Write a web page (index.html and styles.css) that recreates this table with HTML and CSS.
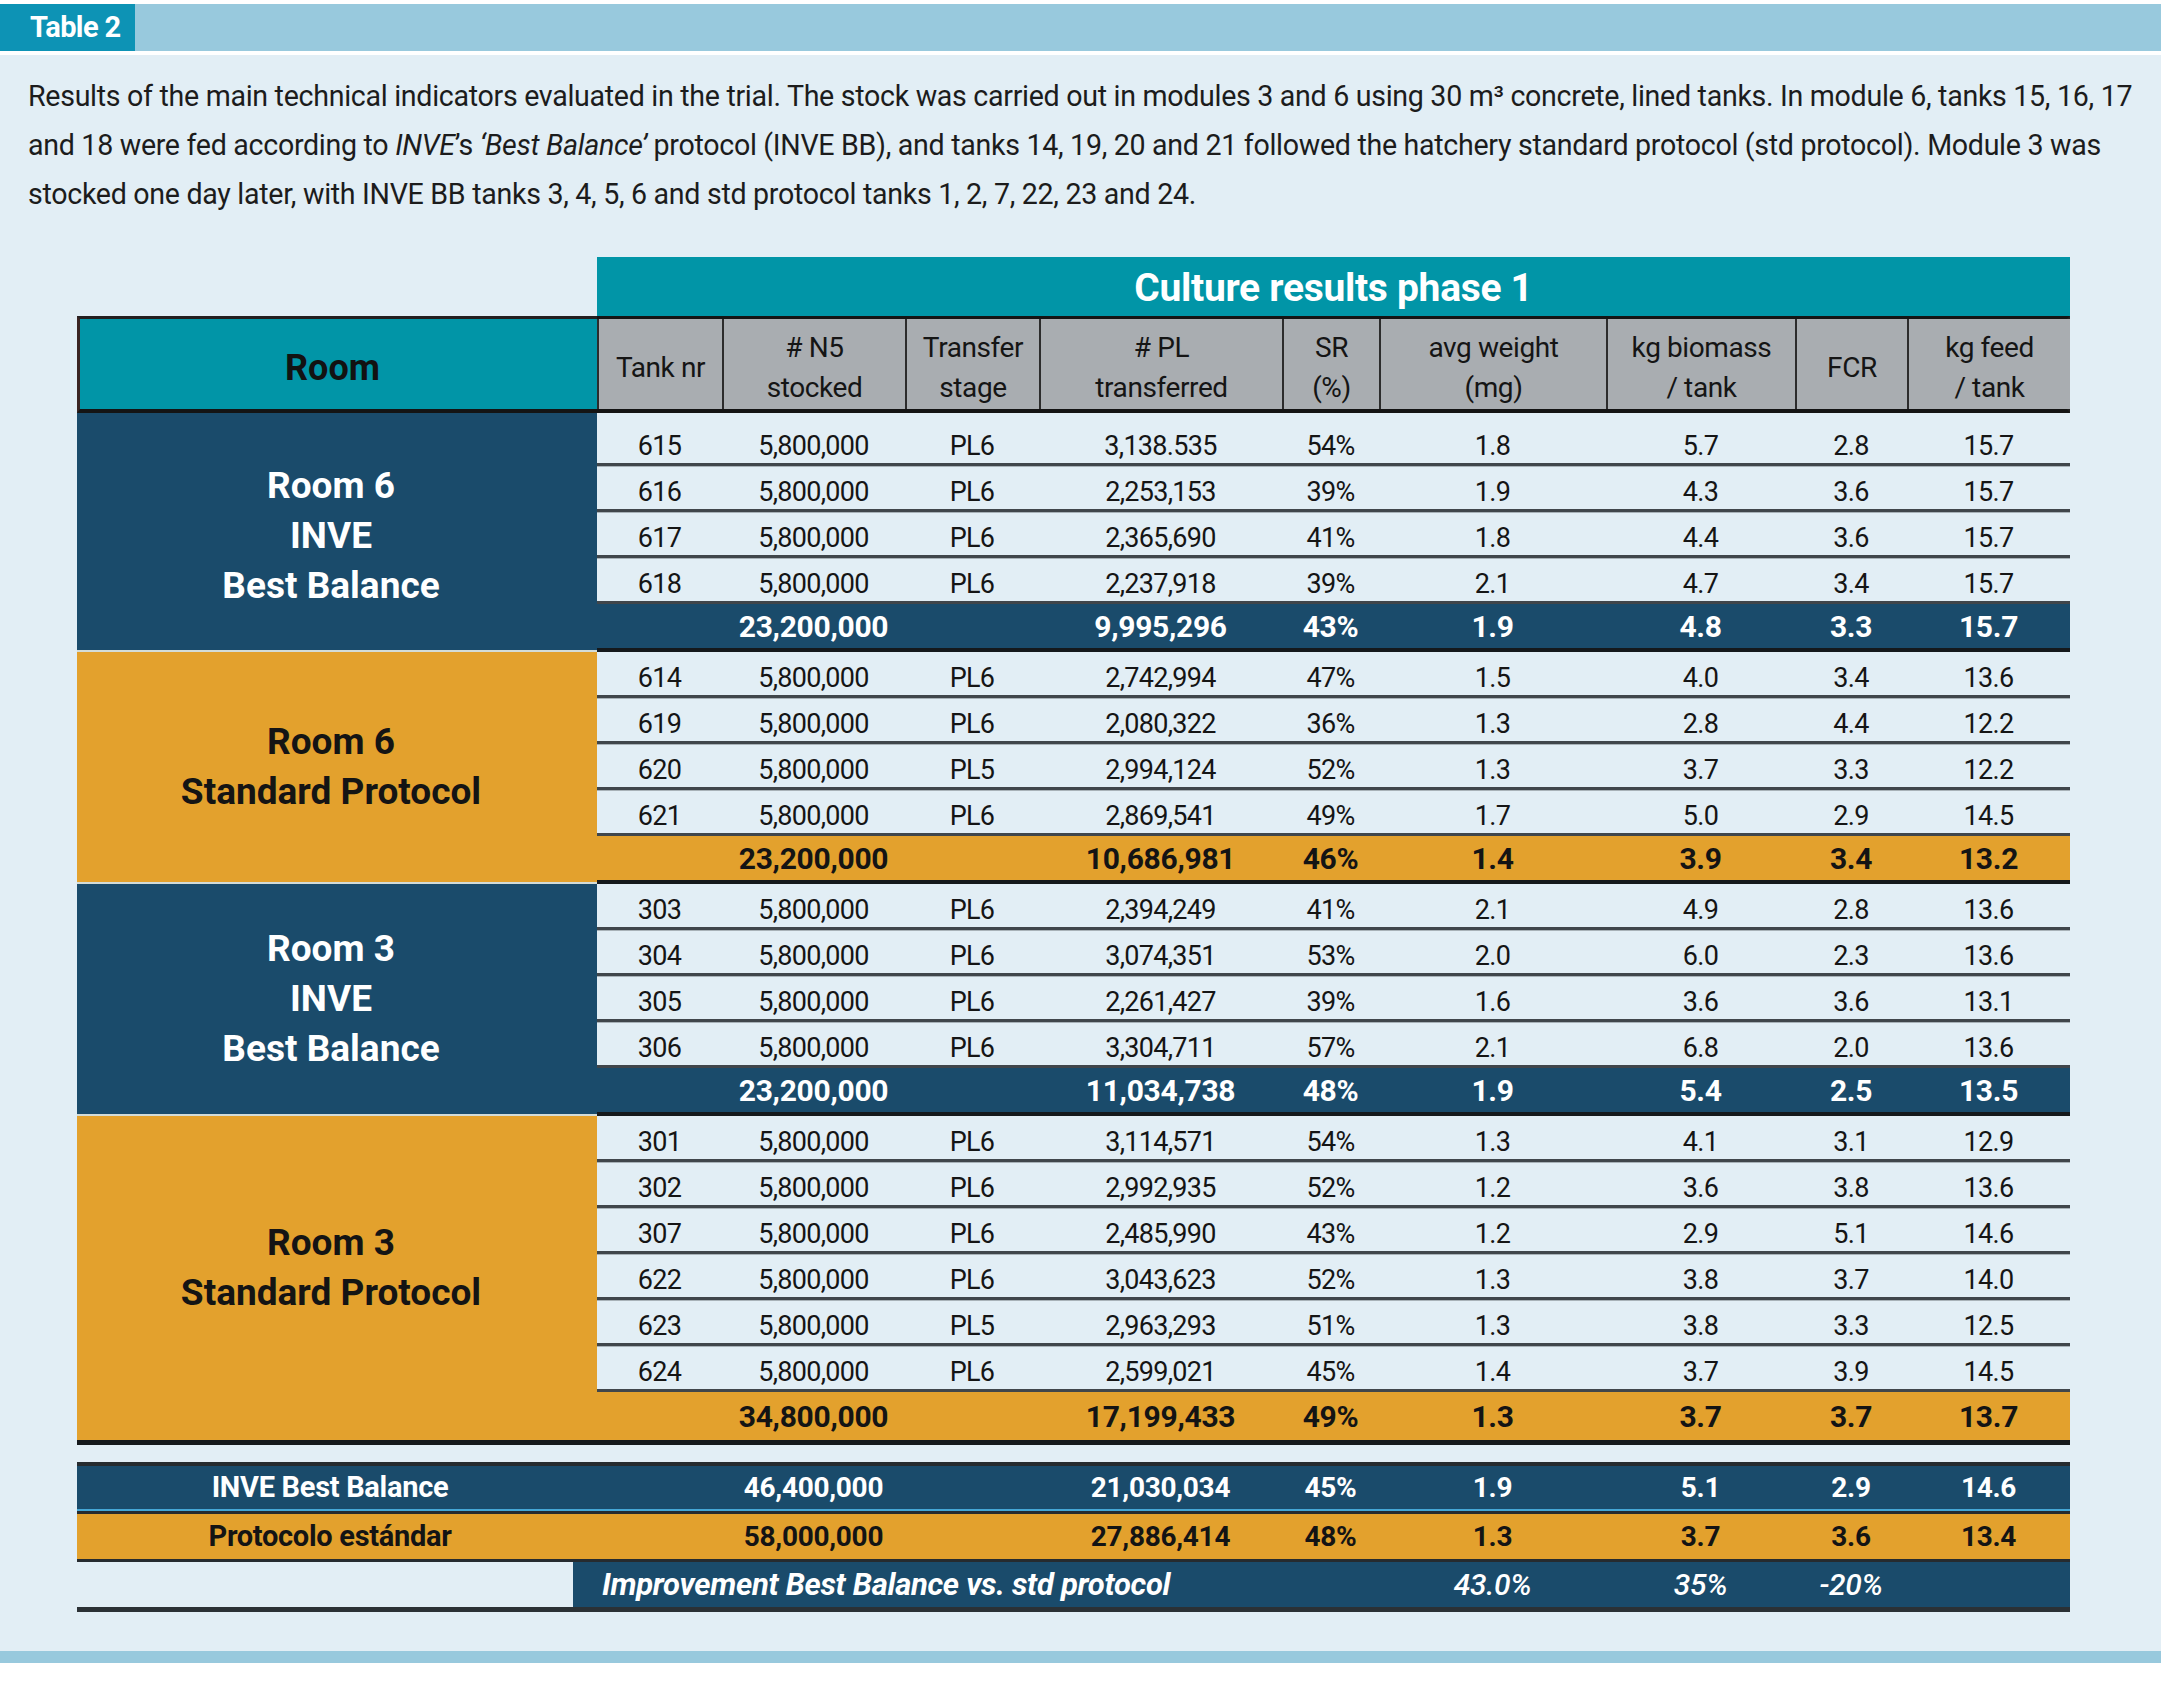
FILE: index.html
```html
<!DOCTYPE html>
<html lang="en">
<head>
<meta charset="utf-8">
<title>Table 2</title>
<link rel="stylesheet" href="styles.css">
</head>
<body>
<div class="topbar"><div class="tab">Table 2</div></div>
<div class="panel">
  <p class="intro">Results of the main technical indicators evaluated in the trial. The stock was carried out in modules 3 and 6 using 30 m³ concrete, lined tanks. In module 6, tanks 15, 16, 17<br>and 18 were fed according to <i>INVE</i>’s <i>‘Best Balance’</i> protocol (INVE BB), and tanks 14, 19, 20 and 21 followed the hatchery standard protocol (std protocol). Module 3 was<br>stocked one day later, with INVE BB tanks 3, 4, 5, 6 and std protocol tanks 1, 2, 7, 22, 23 and 24.</p>

  <div class="table">
    <div class="title-row"><div class="spacer"></div><div class="title">Culture results phase 1</div></div>
    <div class="head-row">
      <div class="room-head">Room</div>
      <div class="col-heads">
        <div>Tank nr</div>
        <div># N5<br>stocked</div>
        <div>Transfer<br>stage</div>
        <div># PL<br>transferred</div>
        <div>SR<br>(%)</div>
        <div>avg weight<br>(mg)</div>
        <div>kg biomass<br>/ tank</div>
        <div>FCR</div>
        <div>kg feed<br>/ tank</div>
      </div>
    </div>

    <div class="group navy first">
      <div class="room">Room 6<br>INVE<br>Best Balance</div>
      <div class="rows">
        <div class="row"><span>615</span><span>5,800,000</span><span>PL6</span><span>3,138.535</span><span>54%</span><span>1.8</span><span>5.7</span><span>2.8</span><span>15.7</span></div>
        <div class="row"><span>616</span><span>5,800,000</span><span>PL6</span><span>2,253,153</span><span>39%</span><span>1.9</span><span>4.3</span><span>3.6</span><span>15.7</span></div>
        <div class="row"><span>617</span><span>5,800,000</span><span>PL6</span><span>2,365,690</span><span>41%</span><span>1.8</span><span>4.4</span><span>3.6</span><span>15.7</span></div>
        <div class="row"><span>618</span><span>5,800,000</span><span>PL6</span><span>2,237,918</span><span>39%</span><span>2.1</span><span>4.7</span><span>3.4</span><span>15.7</span></div>
        <div class="row total"><span></span><span>23,200,000</span><span></span><span>9,995,296</span><span>43%</span><span>1.9</span><span>4.8</span><span>3.3</span><span>15.7</span></div>
      </div>
    </div>

    <div class="group orange">
      <div class="room">Room 6<br>Standard Protocol</div>
      <div class="rows">
        <div class="row"><span>614</span><span>5,800,000</span><span>PL6</span><span>2,742,994</span><span>47%</span><span>1.5</span><span>4.0</span><span>3.4</span><span>13.6</span></div>
        <div class="row"><span>619</span><span>5,800,000</span><span>PL6</span><span>2,080,322</span><span>36%</span><span>1.3</span><span>2.8</span><span>4.4</span><span>12.2</span></div>
        <div class="row"><span>620</span><span>5,800,000</span><span>PL5</span><span>2,994,124</span><span>52%</span><span>1.3</span><span>3.7</span><span>3.3</span><span>12.2</span></div>
        <div class="row"><span>621</span><span>5,800,000</span><span>PL6</span><span>2,869,541</span><span>49%</span><span>1.7</span><span>5.0</span><span>2.9</span><span>14.5</span></div>
        <div class="row total"><span></span><span>23,200,000</span><span></span><span>10,686,981</span><span>46%</span><span>1.4</span><span>3.9</span><span>3.4</span><span>13.2</span></div>
      </div>
    </div>

    <div class="group navy">
      <div class="room">Room 3<br>INVE<br>Best Balance</div>
      <div class="rows">
        <div class="row"><span>303</span><span>5,800,000</span><span>PL6</span><span>2,394,249</span><span>41%</span><span>2.1</span><span>4.9</span><span>2.8</span><span>13.6</span></div>
        <div class="row"><span>304</span><span>5,800,000</span><span>PL6</span><span>3,074,351</span><span>53%</span><span>2.0</span><span>6.0</span><span>2.3</span><span>13.6</span></div>
        <div class="row"><span>305</span><span>5,800,000</span><span>PL6</span><span>2,261,427</span><span>39%</span><span>1.6</span><span>3.6</span><span>3.6</span><span>13.1</span></div>
        <div class="row"><span>306</span><span>5,800,000</span><span>PL6</span><span>3,304,711</span><span>57%</span><span>2.1</span><span>6.8</span><span>2.0</span><span>13.6</span></div>
        <div class="row total"><span></span><span>23,200,000</span><span></span><span>11,034,738</span><span>48%</span><span>1.9</span><span>5.4</span><span>2.5</span><span>13.5</span></div>
      </div>
    </div>

    <div class="group orange last">
      <div class="room">Room 3<br>Standard Protocol</div>
      <div class="rows">
        <div class="row"><span>301</span><span>5,800,000</span><span>PL6</span><span>3,114,571</span><span>54%</span><span>1.3</span><span>4.1</span><span>3.1</span><span>12.9</span></div>
        <div class="row"><span>302</span><span>5,800,000</span><span>PL6</span><span>2,992,935</span><span>52%</span><span>1.2</span><span>3.6</span><span>3.8</span><span>13.6</span></div>
        <div class="row"><span>307</span><span>5,800,000</span><span>PL6</span><span>2,485,990</span><span>43%</span><span>1.2</span><span>2.9</span><span>5.1</span><span>14.6</span></div>
        <div class="row"><span>622</span><span>5,800,000</span><span>PL6</span><span>3,043,623</span><span>52%</span><span>1.3</span><span>3.8</span><span>3.7</span><span>14.0</span></div>
        <div class="row"><span>623</span><span>5,800,000</span><span>PL5</span><span>2,963,293</span><span>51%</span><span>1.3</span><span>3.8</span><span>3.3</span><span>12.5</span></div>
        <div class="row"><span>624</span><span>5,800,000</span><span>PL6</span><span>2,599,021</span><span>45%</span><span>1.4</span><span>3.7</span><span>3.9</span><span>14.5</span></div>
        <div class="row total"><span></span><span>34,800,000</span><span></span><span>17,199,433</span><span>49%</span><span>1.3</span><span>3.7</span><span>3.7</span><span>13.7</span></div>
      </div>
    </div>

    <div class="summary">
      <div class="sum-row navy"><span class="label">INVE Best Balance</span><span></span><span>46,400,000</span><span></span><span>21,030,034</span><span>45%</span><span>1.9</span><span>5.1</span><span>2.9</span><span>14.6</span></div>
      <div class="sum-row orange"><span class="label">Protocolo estándar</span><span></span><span>58,000,000</span><span></span><span>27,886,414</span><span>48%</span><span>1.3</span><span>3.7</span><span>3.6</span><span>13.4</span></div>
      <div class="improve-row">
        <div class="improve"><span class="label">Improvement Best Balance vs. std protocol</span><span>43.0%</span><span>35%</span><span>-20%</span><span></span></div>
      </div>
    </div>
  </div>
</div>
<div class="bottombar"></div>
</body>
</html>
```

FILE: styles.css
```css
* { box-sizing: border-box; }

body {
  margin: 0;
  background: #ffffff;
  font-family: Roboto, "Liberation Sans", "DejaVu Sans", sans-serif;
  color: #1b1b1b;
}

.topbar {
  margin-top: 4px;
  height: 47px;
  background: #98c9dd;
  display: flex;
}

.tab {
  width: 135px;
  background: #0d93b5;
  color: #ffffff;
  font-weight: bold;
  font-size: 29px;
  line-height: 47px;
  padding-left: 30px;
  white-space: nowrap;
  letter-spacing: -0.6px;
}

.panel {
  margin-top: 4px;
  background: #e2eef5;
  padding: 17px 0 39px 28px;
}

.intro {
  margin: 0;
  font-size: 28.6px;
  line-height: 49px;
  letter-spacing: -0.3px;
  white-space: nowrap;
  color: #1c1c1c;
}

.table {
  margin: 38px 0 0 49px;
  width: 1993px;
}

.title-row { display: flex; }
.title-row .spacer { width: 520px; }

.title {
  width: 1473px;
  height: 59px;
  background: #0195a7;
  color: #ffffff;
  font-weight: bold;
  font-size: 39px;
  letter-spacing: -0.3px;
  line-height: 55px;
  padding-top: 4px;
  text-align: center;
}

.head-row {
  display: flex;
  height: 97px;
}

.room-head {
  width: 520px;
  background: #0195a7;
  border-top: 3px solid #231f20;
  border-left: 3px solid #3a2422;
  border-bottom: 4px solid #141414;
  font-weight: bold;
  font-size: 36px;
  color: #121212;
  display: flex;
  align-items: center;
  justify-content: center;
  padding: 8px 12px 0 0;
}

.col-heads {
  width: 1473px;
  display: grid;
  grid-template-columns: 125px 183px 134px 243px 97px 227px 189px 112px 163px;
  border-top: 3px solid #141414;
  border-bottom: 4px solid #141414;
  border-right: 3px solid #202020;
}

.col-heads > div {
  background: #a9adb1;
  border-left: 2px solid #2c2c2c;
  display: flex;
  align-items: center;
  justify-content: center;
  text-align: center;
  font-size: 28px;
  letter-spacing: -0.4px;
  line-height: 40px;
  color: #151515;
  padding-top: 8px;
}

.group { display: flex; }

.room {
  width: 520px;
  display: flex;
  align-items: center;
  justify-content: center;
  text-align: center;
  font-weight: bold;
  font-size: 37px;
  line-height: 50px;
  border-bottom: 2px solid #d3dcd8;
  padding: 0 12px 0 0;
}

.first .room { padding-top: 10px; }
.last .room { padding-bottom: 20px; }

.navy .room { background: #1a4b6b; color: #ffffff; }
.orange .room { background: #e3a12d; color: #141414; }

.rows { width: 1473px; }

.row {
  display: grid;
  grid-template-columns: 125px 183px 134px 243px 97px 227px 189px 112px 163px;
  height: 46px;
  align-items: end;
  text-align: center;
  font-size: 27px;
  line-height: 30px;
  letter-spacing: -0.7px;
  padding-bottom: 2px;
  border-bottom: 3px solid #40464b;
  box-shadow: 0 1px 0 rgba(60, 66, 72, 0.35);
  color: #151515;
}

.first .row:first-child { height: 52.5px; }

.row.total {
  height: 48px;
  align-items: center;
  padding-bottom: 0;
  padding-top: 2px;
  font-weight: bold;
  font-size: 30px;
  letter-spacing: -0.3px;
  border-bottom: 4px solid #15191c;
  box-shadow: none;
}

.navy .total { background: #1a4b6b; color: #ffffff; }
.orange .total { background: #e3a12d; color: #141414; }

.group.last { border-bottom: 5px solid #15191c; }
.group.last .room { border-bottom: none; }
.group.last .total { border-bottom: none; }

.summary {
  margin-top: 17px;
  border-top: 4px solid #262b2f;
}

.sum-row {
  display: grid;
  grid-template-columns: 520px 125px 183px 134px 243px 97px 227px 189px 112px 163px;
  align-items: center;
  text-align: center;
  font-weight: bold;
  font-size: 28px;
  letter-spacing: -0.3px;
}

.sum-row .label {
  font-size: 29px;
  padding-right: 14px;
}

.sum-row.navy {
  height: 45px;
  background: #1a4b6b;
  color: #ffffff;
  border-bottom: 2px solid #45a7d6;
}

.sum-row.orange {
  height: 51px;
  background: #e3a12d;
  color: #141414;
  border-top: 3px solid #262b2f;
  border-bottom: 3px solid #262b2f;
}

.improve-row {
  display: flex;
  justify-content: flex-end;
  border-bottom: 5px solid #2b3135;
}

.improve {
  width: 1497px;
  height: 45px;
  background: #1a4b6b;
  color: #ffffff;
  display: grid;
  grid-template-columns: 806px 227px 189px 112px 163px;
  align-items: center;
  text-align: center;
  font-style: italic;
  font-weight: bold;
  font-size: 31px;
  letter-spacing: -0.3px;
}

.improve span:not(.label) {
  font-weight: 500;
  font-size: 30px;
}

.improve .label {
  text-align: left;
  padding-left: 29px;
}

.bottombar {
  height: 12px;
  background: #98c9dd;
}
```
